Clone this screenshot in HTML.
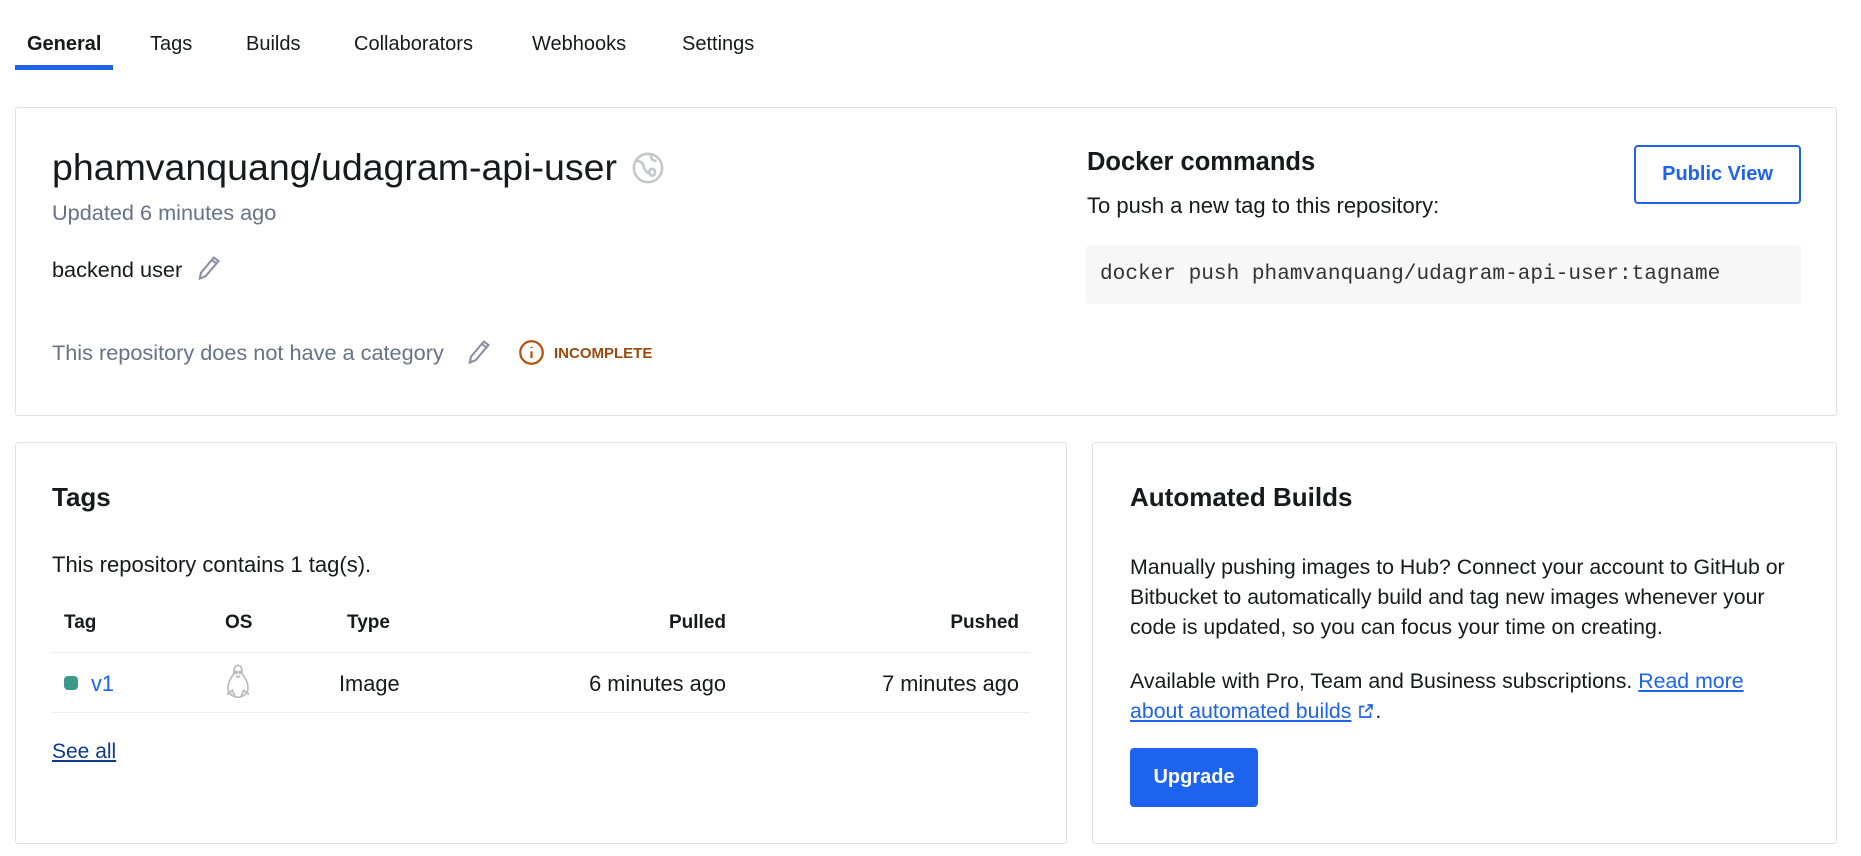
<!DOCTYPE html>
<html><head><meta charset="utf-8"><style>
*{box-sizing:border-box;margin:0;padding:0}
body{width:1861px;height:856px;background:#fff;font-family:"Liberation Sans",Arial,sans-serif;color:#17191e;position:relative;overflow:hidden;font-size:20px}
.abs{position:absolute;white-space:nowrap}
.tab{position:absolute;top:33px;font-size:20px;color:#17191e}
.card{position:absolute;border:1px solid #e1e2e6;border-radius:3px;background:#fff}
.gray{color:#677285}
.th{position:absolute;top:612px;font-weight:bold;font-size:19px}
.td{position:absolute;top:671px;font-size:21.8px}
a{color:#1d63ed}
</style></head><body>
<div class="tab" style="left:27px;font-weight:bold">General</div>
<div class="tab" style="left:150px">Tags</div>
<div class="tab" style="left:246px">Builds</div>
<div class="tab" style="left:354px">Collaborators</div>
<div class="tab" style="left:532px">Webhooks</div>
<div class="tab" style="left:682px">Settings</div>
<div class="abs" style="left:15px;top:65px;width:98px;height:5px;background:#1d63ed"></div>

<div class="card" style="left:15px;top:107px;width:1822px;height:309px"></div>
<div class="abs" style="left:52px;top:146px;font-size:37.5px;display:flex;align-items:center">phamvanquang/udagram-api-user
<svg style="margin-left:14px" width="34" height="34" viewBox="0 0 24 24" fill="none" stroke="#c4c6cc" stroke-width="1.8"><circle cx="12" cy="12" r="10"/><path d="M4 7c3 0 5 2 5 4s2 3 3 5M14 3c0 3 2 4 4 4M13 14c1-2 4-2 4 1s-3 3-4 1z"/></svg></div>
<div class="abs gray" style="left:52px;top:200px;font-size:21.7px">Updated 6 minutes ago</div>
<div class="abs" style="left:52px;top:257px;font-size:21.7px">backend user</div>
<svg class="abs" style="left:194px;top:254px" width="28" height="28" viewBox="0 0 24 24" fill="none" stroke="#8a90a0" stroke-width="1.8"><path d="M5 21l1-5L17 3l4 3L10 19zM15 5l4 3"/></svg>
<div class="abs gray" style="left:52px;top:340px;font-size:21.7px">This repository does not have a category</div>
<svg class="abs" style="left:464px;top:338px" width="28" height="28" viewBox="0 0 24 24" fill="none" stroke="#8a90a0" stroke-width="1.8"><path d="M5 21l1-5L17 3l4 3L10 19zM15 5l4 3"/></svg>
<svg class="abs" style="left:518px;top:339px" width="27" height="27" viewBox="0 0 24 24" fill="none" stroke="#b9520a" stroke-width="2"><circle cx="12" cy="12" r="10"/><path d="M12 11v6M12 7v1"/></svg>
<div class="abs" style="left:554px;top:345px;font-size:15px;font-weight:bold;color:#9c4a0a">INCOMPLETE</div>

<div class="abs" style="left:1087px;top:148px;font-size:25.5px;font-weight:bold">Docker commands</div>
<div class="abs" style="left:1087px;top:193px;font-size:22px">To push a new tag to this repository:</div>
<div class="abs" style="left:1634px;top:145px;width:167px;height:59px;border:2px solid #1d63ed;border-radius:4px;color:#1d63ed;font-size:20px;font-weight:bold;text-align:center;line-height:55px">Public View</div>
<div class="abs" style="left:1086px;top:245px;width:715px;height:59px;background:#f7f7f7;border-radius:3px"></div>
<div class="abs" style="left:1100px;top:262px;font-family:'Liberation Mono',monospace;font-size:21.1px;color:#333">docker push phamvanquang/udagram-api-user:tagname</div>

<div class="card" style="left:15px;top:442px;width:1052px;height:402px"></div>
<div class="abs" style="left:52px;top:482px;font-size:26px;font-weight:bold">Tags</div>
<div class="abs" style="left:52px;top:552px;font-size:22px">This repository contains 1 tag(s).</div>
<div class="th" style="left:64px">Tag</div>
<div class="th" style="left:225px">OS</div>
<div class="th" style="left:347px">Type</div>
<div class="th" style="right:1135px">Pulled</div>
<div class="th" style="right:842px">Pushed</div>
<div class="abs" style="left:52px;top:652px;width:978px;height:1px;background:#ebecef"></div>
<div class="abs" style="left:64px;top:676px;width:14px;height:14px;border-radius:4px;background:#3a9a89"></div>
<div class="td" style="left:91px;color:#1d63ed">v1</div>
<svg class="abs" style="left:224px;top:664px" width="28" height="36" viewBox="0 0 20 26" fill="none" stroke="#bbb" stroke-width="1.2"><path d="M10 1c-3 0-3 4-3 6-2 3-5 7-4 12 1 3 4 5 7 5s6-2 7-5c1-5-2-9-4-12 0-2 0-6-3-6z"/><circle cx="8.5" cy="6" r=".8"/><circle cx="11.5" cy="6" r=".8"/><path d="M8.5 8.5l1.5 1 1.5-1"/><path d="M2 22l4-3 2 5M18 22l-4-3-2 5"/></svg>
<div class="td" style="left:339px">Image</div>
<div class="td" style="right:1135px">6 minutes ago</div>
<div class="td" style="right:842px">7 minutes ago</div>
<div class="abs" style="left:52px;top:712px;width:978px;height:1px;background:#ebecef"></div>
<div class="abs" style="left:52px;top:740px;font-size:21px"><a style="color:#0c3a8f;text-decoration:underline">See all</a></div>

<div class="card" style="left:1092px;top:442px;width:745px;height:402px"></div>
<div class="abs" style="left:1130px;top:482px;font-size:26px;font-weight:bold">Automated Builds</div>
<div class="abs" style="left:1130px;top:552px;font-size:21.3px;line-height:30px">Manually pushing images to Hub? Connect your account to GitHub or<br>Bitbucket to automatically build and tag new images whenever your<br>code is updated, so you can focus your time on creating.</div>
<div class="abs" style="left:1130px;top:666px;font-size:21.3px;line-height:30px">Available with Pro, Team and Business subscriptions. <a style="text-decoration:underline">Read more</a><br><a style="text-decoration:underline">about automated builds</a> <svg width="18" height="18" viewBox="0 0 24 24" fill="none" stroke="#1d63ed" stroke-width="2.2" style="vertical-align:-2px"><path d="M14 4h6v6M20 4l-9 9M18 14v6H4V6h6"/></svg>.</div>
<div class="abs" style="left:1130px;top:748px;width:128px;height:59px;background:#1d63ed;border-radius:4px;color:#fff;font-weight:bold;font-size:20px;text-align:center;line-height:59px">Upgrade</div>
</body></html>
